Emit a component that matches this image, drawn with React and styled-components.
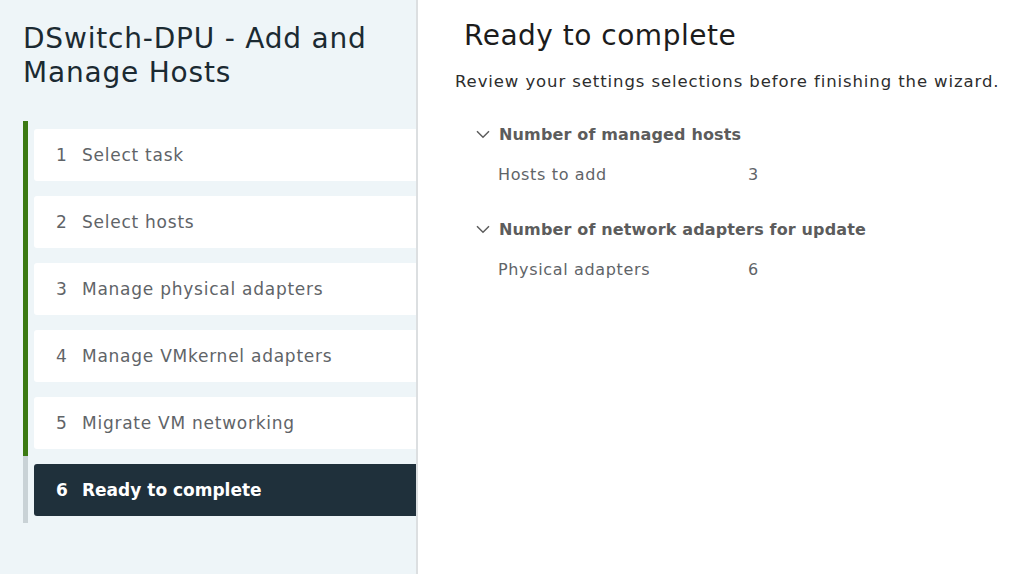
import React from 'react';
import styled, { createGlobalStyle } from 'styled-components';

const GlobalStyle = createGlobalStyle`
  html, body {
    margin: 0;
    padding: 0;
    font-family: 'DejaVu Sans', 'Noto Sans', sans-serif;
    background: #fff;
  }
`;

const Page = styled.div`
  display: grid;
  grid-template-columns: 418px 1fr;
  height: 574px;
  overflow: hidden;
`;

const Sidebar = styled.aside`
  background: #eef5f8;
  border-right: 2px solid #dcdfe1;
  padding: 22px 0 0 23px;
`;

const WizardTitle = styled.h1`
  margin: 0 0 31px;
  font-size: 28px;
  line-height: 34px;
  letter-spacing: 0.8px;
  font-weight: 400;
  color: #1b2a32;
`;

const Steps = styled.ol`
  list-style: none;
  margin: 0;
  padding: 0;
`;

const StepItem = styled.li`
  border-left: 5px solid ${(p) => (p.$done ? '#3c7a13' : '#c9d2d6')};
  padding: 7.5px 0 7.5px 6px;
`;

const StepCard = styled.div`
  height: 52px;
  display: flex;
  align-items: center;
  padding-left: 22px;
  border-radius: 3px 0 0 3px;
  background: ${(p) => (p.$active ? '#1f303b' : '#fff')};
  color: ${(p) => (p.$active ? '#fff' : '#5f6468')};
  font-size: 17px;
  letter-spacing: ${(p) => (p.$active ? '0' : '0.75px')};
  font-weight: ${(p) => (p.$active ? 700 : 400)};
`;

const StepNum = styled.span`
  width: 26px;
`;

const Main = styled.main`
  padding: 18px 0 0 37px;
  color: #333;
`;

const PageTitle = styled.h2`
  margin: 0 0 16px 9px;
  font-size: 28px;
  line-height: 36px;
  letter-spacing: 0.5px;
  font-weight: 400;
  color: #1c1c1c;
`;

const Description = styled.p`
  margin: 0 0 26px;
  font-size: 16.5px;
  line-height: 24px;
  letter-spacing: 0.9px;
  color: #2d2d2d;
`;

const Section = styled.section`
  margin: 0 0 29px 21px;
`;

const SectionHeader = styled.div`
  display: flex;
  align-items: center;
  gap: 9px;
  height: 28px;
  font-size: 16px;
  font-weight: 700;
  letter-spacing: 0.15px;
  color: #5c5c5c;
`;

const Row = styled.div`
  display: grid;
  grid-template-columns: 250px 1fr;
  padding-left: 22px;
  margin-top: 16px;
  font-size: 16px;
  line-height: 22px;
  letter-spacing: 0.65px;
  color: #5f6468;
`;

const Chevron = () => (
  <svg width="14" height="9" viewBox="0 0 14 9" fill="none">
    <path d="M1 1.2 L7 7.2 L13 1.2" stroke="#5c5c5c" strokeWidth="1.5" />
  </svg>
);

const steps = [
  'Select task',
  'Select hosts',
  'Manage physical adapters',
  'Manage VMkernel adapters',
  'Migrate VM networking',
  'Ready to complete',
];

const sections = [
  { title: 'Number of managed hosts', rows: [['Hosts to add', '3']] },
  { title: 'Number of network adapters for update', rows: [['Physical adapters', '6']] },
];

export default function App() {
  const current = 6;
  return (
    <>
      <GlobalStyle />
      <Page>
        <Sidebar>
          <WizardTitle>
            DSwitch-DPU - Add and
            <br />
            Manage Hosts
          </WizardTitle>
          <Steps>
            {steps.map((s, i) => (
              <StepItem key={s} $done={i + 1 < current}>
                <StepCard $active={i + 1 === current}>
                  <StepNum>{i + 1}</StepNum>
                  {s}
                </StepCard>
              </StepItem>
            ))}
          </Steps>
        </Sidebar>
        <Main>
          <PageTitle>Ready to complete</PageTitle>
          <Description>Review your settings selections before finishing the wizard.</Description>
          {sections.map((sec) => (
            <Section key={sec.title}>
              <SectionHeader>
                <Chevron />
                {sec.title}
              </SectionHeader>
              {sec.rows.map(([k, v]) => (
                <Row key={k}>
                  <span>{k}</span>
                  <span>{v}</span>
                </Row>
              ))}
            </Section>
          ))}
        </Main>
      </Page>
    </>
  );
}
